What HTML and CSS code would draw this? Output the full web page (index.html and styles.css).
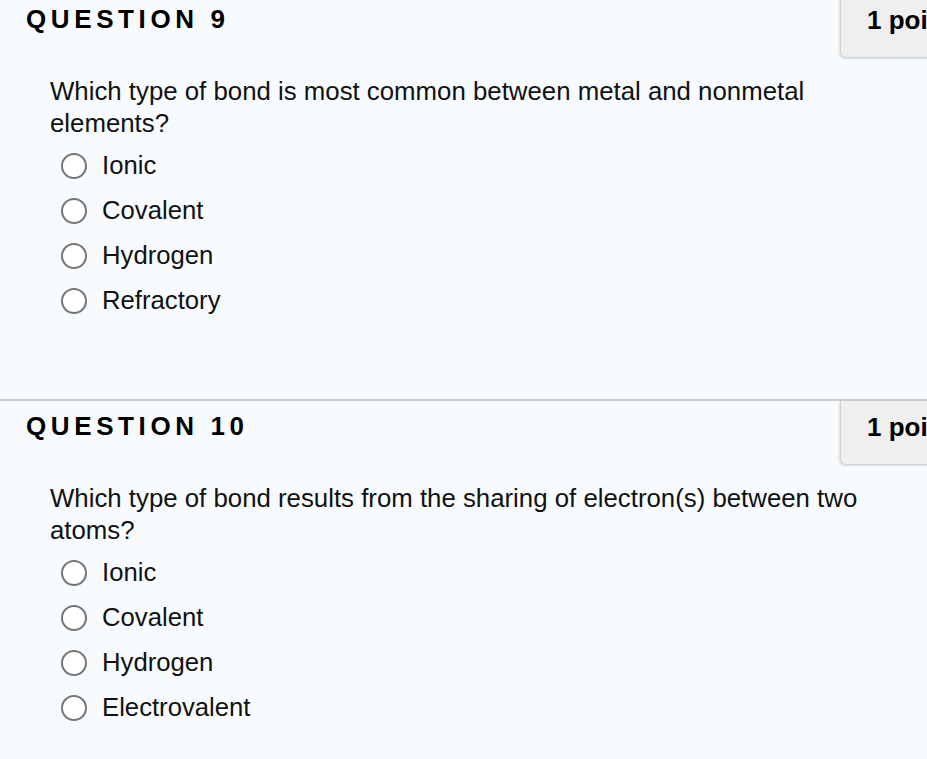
FILE: index.html
```html
<!DOCTYPE html>
<html>
<head>
<meta charset="utf-8">
<link rel="stylesheet" href="styles.css">
</head>
<body>
<div class="page">
  <section class="question first">
    <div class="qhead">
      <h2 class="qtitle">QUESTION 9</h2>
      <div class="points">1 points</div>
    </div>
    <div class="qbody">
      <p class="qtext">Which type of bond is most common between metal and nonmetal elements?</p>
      <ul class="options">
        <li><span class="radio"></span>Ionic</li>
        <li><span class="radio"></span>Covalent</li>
        <li><span class="radio"></span>Hydrogen</li>
        <li><span class="radio"></span>Refractory</li>
      </ul>
    </div>
  </section>
  <section class="question">
    <div class="qhead">
      <h2 class="qtitle">QUESTION 10</h2>
      <div class="points">1 points</div>
    </div>
    <div class="qbody">
      <p class="qtext">Which type of bond results from the sharing of electron(s) between two atoms?</p>
      <ul class="options">
        <li><span class="radio"></span>Ionic</li>
        <li><span class="radio"></span>Covalent</li>
        <li><span class="radio"></span>Hydrogen</li>
        <li><span class="radio"></span>Electrovalent</li>
      </ul>
    </div>
  </section>
</div>
</body>
</html>
```

FILE: styles.css
```css
html, body {
  margin: 0;
  padding: 0;
  background: #f7fbfe;
  overflow: hidden;
}
body {
  font-family: "Liberation Sans", Arial, sans-serif;
  color: #111;
  width: 927px;
  height: 759px;
}
.page {
  display: flex;
  flex-direction: column;
}
.question {
  height: 407px;
  border-top: 2px solid #cbcbcb;
  box-sizing: border-box;
  display: flex;
  flex-direction: column;
}
.question.first {
  margin-top: -8px;
  border-top-color: transparent;
}
.qhead {
  display: flex;
  justify-content: space-between;
  align-items: flex-start;
}
.qtitle {
  margin: 11px 0 0 26px;
  font-size: 26px;
  font-weight: bold;
  letter-spacing: 4.6px;
  line-height: 28px;
  color: #000;
}
.points {
  width: 140px;
  height: 64px;
  margin-right: -53px;
  box-sizing: border-box;
  background: #efefef;
  border: 1px solid #d2d2d2;
  border-top: none;
  border-right: none;
  border-radius: 0 0 0 6px;
  box-shadow: -1px 1px 2px rgba(0,0,0,0.12);
  font-size: 26px;
  font-weight: bold;
  padding: 11px 0 0 26px;
  white-space: nowrap;
  overflow: hidden;
  color: #000;
}
.qbody {
  margin-top: 17px;
  padding-left: 50px;
}
.qtext {
  margin: 0;
  width: 830px;
  font-size: 25.8px;
  line-height: 32px;
  color: #111;
}
.options {
  list-style: none;
  margin: 4px 0 0 0;
  padding: 0 0 0 11px;
}
.options li {
  display: flex;
  align-items: center;
  height: 45px;
  font-size: 25.7px;
}
.radio {
  width: 22px;
  height: 22px;
  border: 2px solid #767676;
  border-radius: 50%;
  background: #fff;
  margin-right: 15px;
  flex: none;
}
```
